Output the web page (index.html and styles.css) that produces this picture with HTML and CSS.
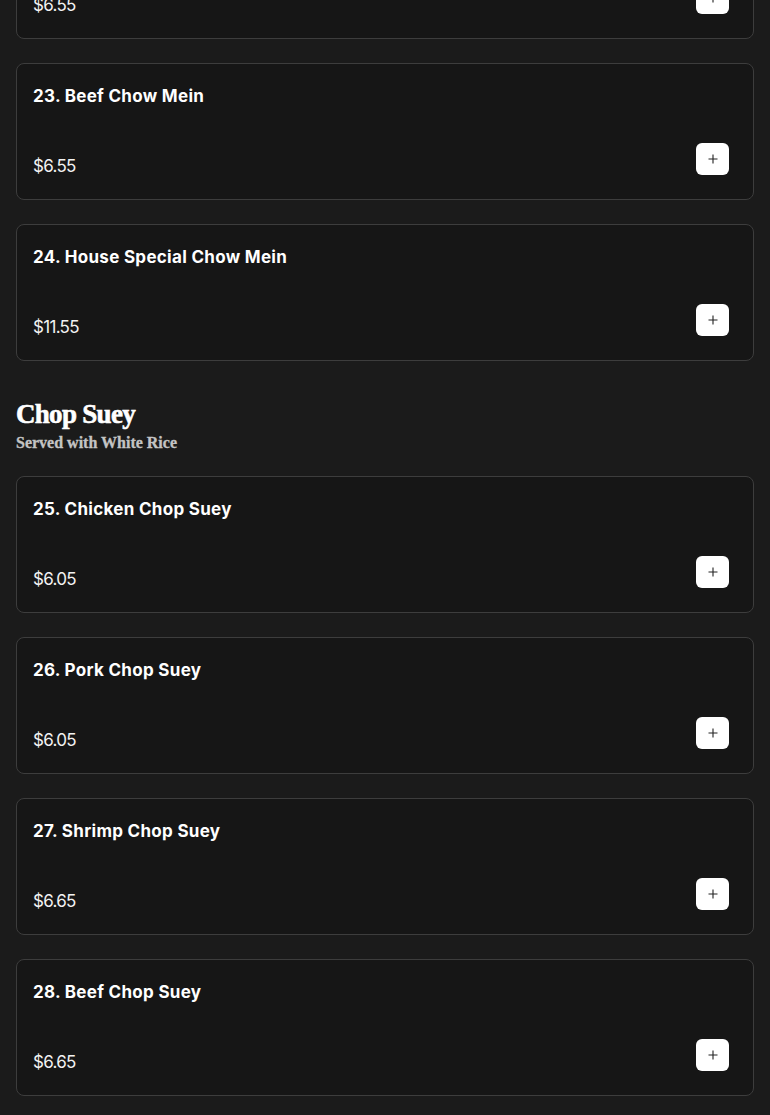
FILE: index.html
```html
<!DOCTYPE html>
<html>
<head>
<meta charset="utf-8">
<link rel="stylesheet" href="styles.css">
</head>
<body>
<main class="menu">
  <section class="section section-first">
    <div class="items">
      <div class="item">
        <div class="item-name">22. Pork Chow Mein</div>
        <div class="item-row">
          <span class="item-price">$6.55</span>
          <button class="add-btn" aria-label="Add"><svg viewBox="0 0 10 10" width="10" height="10"><path d="M5 0.5V9.5M0.5 5H9.5" stroke="#222" stroke-width="1.1" fill="none"/></svg></button>
        </div>
      </div>
      <div class="item">
        <div class="item-name">23. Beef Chow Mein</div>
        <div class="item-row">
          <span class="item-price">$6.55</span>
          <button class="add-btn" aria-label="Add"><svg viewBox="0 0 10 10" width="10" height="10"><path d="M5 0.5V9.5M0.5 5H9.5" stroke="#222" stroke-width="1.1" fill="none"/></svg></button>
        </div>
      </div>
      <div class="item">
        <div class="item-name">24. House Special Chow Mein</div>
        <div class="item-row">
          <span class="item-price">$11.55</span>
          <button class="add-btn" aria-label="Add"><svg viewBox="0 0 10 10" width="10" height="10"><path d="M5 0.5V9.5M0.5 5H9.5" stroke="#222" stroke-width="1.1" fill="none"/></svg></button>
        </div>
      </div>
    </div>
  </section>

  <section class="section">
    <header class="section-head">
      <h2 class="section-title">Chop Suey</h2>
      <p class="section-sub">Served with White Rice</p>
    </header>
    <div class="items">
      <div class="item">
        <div class="item-name">25. Chicken Chop Suey</div>
        <div class="item-row">
          <span class="item-price">$6.05</span>
          <button class="add-btn" aria-label="Add"><svg viewBox="0 0 10 10" width="10" height="10"><path d="M5 0.5V9.5M0.5 5H9.5" stroke="#222" stroke-width="1.1" fill="none"/></svg></button>
        </div>
      </div>
      <div class="item">
        <div class="item-name">26. Pork Chop Suey</div>
        <div class="item-row">
          <span class="item-price">$6.05</span>
          <button class="add-btn" aria-label="Add"><svg viewBox="0 0 10 10" width="10" height="10"><path d="M5 0.5V9.5M0.5 5H9.5" stroke="#222" stroke-width="1.1" fill="none"/></svg></button>
        </div>
      </div>
      <div class="item">
        <div class="item-name">27. Shrimp Chop Suey</div>
        <div class="item-row">
          <span class="item-price">$6.65</span>
          <button class="add-btn" aria-label="Add"><svg viewBox="0 0 10 10" width="10" height="10"><path d="M5 0.5V9.5M0.5 5H9.5" stroke="#222" stroke-width="1.1" fill="none"/></svg></button>
        </div>
      </div>
      <div class="item">
        <div class="item-name">28. Beef Chop Suey</div>
        <div class="item-row">
          <span class="item-price">$6.65</span>
          <button class="add-btn" aria-label="Add"><svg viewBox="0 0 10 10" width="10" height="10"><path d="M5 0.5V9.5M0.5 5H9.5" stroke="#222" stroke-width="1.1" fill="none"/></svg></button>
        </div>
      </div>
    </div>
  </section>
</main>
</body>
</html>
```

FILE: styles.css
```css
html, body {
  margin: 0;
  padding: 0;
  background: #1b1b1b;
  color: #ffffff;
  font-family: "Inter", "Open Sans", sans-serif;
}

.menu {
  padding: 0 16px;
  margin-top: -98px;
}

.items {
  display: flex;
  flex-direction: column;
  gap: 24px;
}

.item {
  background: #161616;
  border: 1px solid #3d3d3d;
  border-radius: 8px;
  padding: 20px 24px 24px 16px;
  display: flex;
  flex-direction: column;
  gap: 35px;
}

.item-name {
  font-size: 17px;
  font-weight: 650;
  line-height: 24px;
  letter-spacing: 0.3px;
}

.item-row {
  display: flex;
  justify-content: space-between;
  align-items: flex-end;
  height: 32px;
}

.item-price {
  font-size: 17px;
  font-weight: 400;
  line-height: 17px;
  letter-spacing: -0.7px;
  color: #f2f2f2;
}

.add-btn {
  width: 33px;
  height: 32px;
  border: none;
  border-radius: 6px;
  background: #ffffff;
  display: flex;
  align-items: center;
  justify-content: center;
  padding: 0;
}

.section-head {
  padding: 35px 0 22px;
}

.section-title {
  margin: 0;
  font-family: "Liberation Serif", serif;
  font-weight: 700;
  font-size: 27px;
  line-height: 36px;
  letter-spacing: -0.7px;
  -webkit-text-stroke: 0.6px #ffffff;
}

.section-sub {
  margin: 0;
  font-family: "Liberation Serif", serif;
  font-weight: 700;
  font-size: 16px;
  line-height: 22px;
  color: #c4c4c4;
  -webkit-text-stroke: 0.3px #c4c4c4;
}
```
